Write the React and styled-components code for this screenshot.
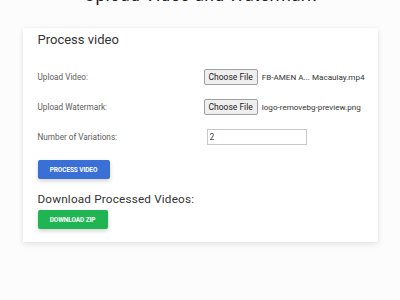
import React from 'react';
import styled, { createGlobalStyle } from 'styled-components';

const GlobalStyle = createGlobalStyle`
  html, body {
    margin: 0;
    padding: 0;
    background: #fdfcfd;
    font-family: Roboto, "Liberation Sans", sans-serif;
    overflow: hidden;
  }
`;

const Page = styled.div`
  width: 400px;
  height: 300px;
  display: flex;
  flex-direction: column;
  align-items: center;
`;

const Title = styled.h1`
  margin: -15px 0 0;
  font-size: 17.5px;
  font-weight: 400;
  color: #222;
  line-height: 21px;
  letter-spacing: 0.2px;
  white-space: nowrap;
`;

const Card = styled.div`
  margin-top: 22px;
  width: 355px;
  box-sizing: border-box;
  padding: 2px 15px 13px;
  background: #fff;
  box-shadow: 0 2px 6px rgba(0, 0, 0, 0.1), 0 0 2px rgba(0, 0, 0, 0.04);
  display: flex;
  flex-direction: column;
  align-items: flex-start;
`;

const CardTitle = styled.h2`
  margin: 0;
  font-size: 13px;
  font-weight: 400;
  color: #333;
  line-height: 20px;
`;

const Form = styled.div`
  align-self: stretch;
  margin: 18px 0 14px;
  display: flex;
  flex-direction: column;
  gap: 12px;
`;

const Row = styled.div`
  display: grid;
  grid-template-columns: 166px 1fr;
  align-items: center;
  height: 18px;
`;

const Label = styled.span`
  font-size: 8.2px;
  color: #5c5c5c;
  white-space: nowrap;
`;

const FilePicker = styled.div`
  display: flex;
  align-items: center;
  gap: 4px;
  white-space: nowrap;
`;

const ChooseButton = styled.span`
  box-sizing: border-box;
  height: 16px;
  padding: 0 4px;
  display: flex;
  align-items: center;
  background: #efefef;
  border: 1px solid #a0a0a0;
  border-radius: 2px;
  font-size: 8.5px;
  color: #222;
`;

const FileName = styled.span`
  font-size: 8.1px;
  color: #333;
`;

const NumberInput = styled.input`
  box-sizing: border-box;
  width: 100px;
  height: 16px;
  margin-left: 3px;
  padding: 0 2px;
  border: 1px solid #c8c8c8;
  font-family: Roboto, "Liberation Sans", sans-serif;
  font-size: 8.5px;
  color: #444;
  outline: none;
`;

const ActionButton = styled.button`
  box-sizing: border-box;
  width: ${p => p.$width}px;
  height: 19px;
  padding: 0;
  border: none;
  border-radius: 2px;
  background: ${p => p.$color};
  color: #fff;
  font-family: Roboto, "Liberation Sans", sans-serif;
  font-size: 6.5px;
  font-weight: 700;
  text-transform: uppercase;
  letter-spacing: -0.1px;
  box-shadow: 0 2px 4px rgba(0, 0, 0, 0.18);
  cursor: pointer;
`;

const SubTitle = styled.h3`
  margin: 12px 0 3px;
  font-size: 11.7px;
  font-weight: 400;
  color: #333;
  line-height: 16px;
  letter-spacing: 0.2px;
`;

export default function App() {
  return (
    <>
      <GlobalStyle />
      <Page>
        <Title>Upload Video and Watermark</Title>
        <Card>
          <CardTitle>Process video</CardTitle>
          <Form>
            <Row>
              <Label>Upload Video:</Label>
              <FilePicker>
                <ChooseButton>Choose File</ChooseButton>
                <FileName>FB-AMEN A... Macaulay.mp4</FileName>
              </FilePicker>
            </Row>
            <Row>
              <Label>Upload Watermark:</Label>
              <FilePicker>
                <ChooseButton>Choose File</ChooseButton>
                <FileName>logo-removebg-preview.png</FileName>
              </FilePicker>
            </Row>
            <Row>
              <Label>Number of Variations:</Label>
              <NumberInput type="text" defaultValue="2" />
            </Row>
          </Form>
          <ActionButton $color="#3a6fd6" $width={72}>Process Video</ActionButton>
          <SubTitle>Download Processed Videos:</SubTitle>
          <ActionButton $color="#1fb552" $width={70}>Download Zip</ActionButton>
        </Card>
      </Page>
    </>
  );
}
